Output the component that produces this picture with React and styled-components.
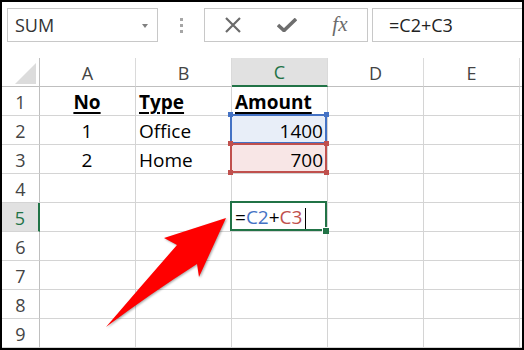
import React from "react";
import styled, { createGlobalStyle } from "styled-components";

const Global = createGlobalStyle`
  html, body { margin: 0; padding: 0; background: #fff; }
  body { font-family: "Open Sans", "Liberation Sans", sans-serif; }
`;

const GREEN = "#217346";
const BLUE = "#4472c4";
const RED = "#c0504d";
const GRID = "#d4d4d4";

const Frame = styled.div`
  position: relative;
  width: 524px;
  height: 350px;
  box-sizing: border-box;
  border: 2px solid #000;
  overflow: hidden;
  background: #fff;
  display: flex;
  flex-direction: column;
`;

const Toolbar = styled.div`
  display: flex;
  align-items: flex-start;
  height: 56px;
  flex: none;
  box-sizing: border-box;
  padding: 6px 0 0 5px;
`;

const Box = styled.div`
  height: 34px;
  box-sizing: border-box;
  border: 1px solid #c8c8c8;
  display: flex;
  align-items: center;
  font-family: "Open Sans", sans-serif;
  font-size: 18px;
  color: #222;
`;

const NameBox = styled(Box)`
  width: 151px;
  justify-content: space-between;
  padding: 0 9px 0 7px;
  color: #333;
`;

const Caret = styled.span`
  width: 0;
  height: 0;
  border-left: 3.5px solid transparent;
  border-right: 3.5px solid transparent;
  border-top: 4px solid #808080;
  margin-top: 1px;
`;

const Dots = styled.div`
  width: 46px;
  height: 34px;
  display: flex;
  flex-direction: column;
  align-items: center;
  justify-content: center;
  gap: 3px;
`;

const Dot = styled.span`
  width: 3px;
  height: 3px;
  background: #a6a6a6;
`;

const Controls = styled(Box)`
  width: 164px;
  justify-content: space-around;
  padding: 0 2px;
  color: #6b6b6b;
`;

const Fx = styled.span`
  font-family: "Liberation Serif", "DejaVu Serif", serif;
  font-style: italic;
  font-size: 21px;
  color: #6b6b6b;
  margin-top: -1px;
`;

const Formula = styled(Box)`
  flex: 1;
  margin-left: 4px;
  margin-right: -2px;
  padding-left: 16px;
`;

const Sheet = styled.div`
  display: grid;
  grid-template-columns: 38px repeat(5, 96px) 1fr;
  grid-auto-rows: 29px;
  flex: none;
`;

const HeadCell = styled.div`
  box-sizing: border-box;
  display: flex;
  align-items: center;
  justify-content: center;
  font-family: "Open Sans", sans-serif;
  font-size: 18px;
  color: ${(p) => (p.$active ? GREEN : "#444")};
  background: ${(p) => (p.$active ? "#e1e1e1" : "#fff")};
  border-right: 1px solid #dadada;
  border-bottom: 1px solid #bfbfbf;
  padding-top: 1px;
`;

const ColHead = styled(HeadCell)`
  ${(p) => p.$active && `border-bottom: 2px solid ${GREEN};`}
`;

const RowHead = styled(HeadCell)`
  border-bottom: 1px solid #d4d4d4;
  border-right: 1px solid #bfbfbf;
  ${(p) => p.$active && `border-right: 2px solid ${GREEN};`}
`;

const Corner = styled(HeadCell)`
  position: relative;
  border-right: 1px solid #bfbfbf;
`;

const CornerTri = styled.svg`
  position: absolute;
  left: 0;
  top: 0;
`;

const fills = { blue: "#e8eef8", red: "#f8e6e6", green: "#fff" };
const rings = { blue: BLUE, red: RED, green: GREEN };

const Cell = styled.div`
  position: relative;
  box-sizing: border-box;
  border-right: 1px solid ${GRID};
  border-bottom: 1px solid ${GRID};
  display: flex;
  align-items: center;
  justify-content: ${(p) =>
    p.$align === "center" ? "center" : p.$align === "right" ? "flex-end" : "flex-start"};
  padding: 3px 4px 0 3px;
  font-family: "Open Sans", sans-serif;
  font-size: 19px;
  line-height: 1;
  color: #000;
  font-weight: ${(p) => (p.$bold ? 700 : 400)};
  background: ${(p) => (p.$sel ? fills[p.$sel] : "#fff")};
  ${(p) =>
    p.$sel &&
    `&::after {
      content: "";
      position: absolute;
      top: -2px; left: -2px; right: 0; bottom: 0;
      border: 2px solid ${rings[p.$sel]};
      pointer-events: none;
      z-index: 1;
    }`}
`;

const Under = styled.span`
  text-decoration: underline;
  text-decoration-thickness: 2px;
  text-underline-offset: 3px;
`;

const Handle = styled.span`
  position: absolute;
  width: 5px;
  height: 5px;
  background: ${(p) => p.$c};
  z-index: 2;
  ${(p) => (p.$top ? "top: -4px;" : "bottom: -2px;")}
  ${(p) => (p.$left ? "left: -4px;" : "right: -2px;")}
`;

const FillHandle = styled.span`
  position: absolute;
  right: -2px;
  bottom: -3px;
  width: 6px;
  height: 6px;
  background: ${GREEN};
  border-left: 1px solid #fff;
  border-top: 1px solid #fff;
  z-index: 2;
`;

const Ref = styled.span`
  color: ${(p) => p.$c};
`;

const Caret2 = styled.span`
  display: inline-block;
  width: 1px;
  height: 22px;
  background: #000;
  margin-left: 3px;
  vertical-align: middle;
`;

const Arrow = styled.svg`
  position: absolute;
  left: -2px;
  top: -2px;
  z-index: 5;
  filter: drop-shadow(1px 1px 1px rgba(0, 0, 0, 0.35));
`;

const cols = ["A", "B", "C", "D", "E"];

const data = {
  1: [
    { t: <Under>No</Under>, a: "center", b: true },
    { t: <Under>Type</Under>, b: true },
    { t: <Under>Amount</Under>, b: true },
  ],
  2: [{ t: "1", a: "center" }, { t: "Office" }, { t: "1400", a: "right", s: "blue" }],
  3: [{ t: "2", a: "center" }, { t: "Home" }, { t: "700", a: "right", s: "red" }],
  5: [
    {},
    {},
    {
      s: "green",
      t: (
        <span>
          =<Ref $c={BLUE}>C2</Ref>+<Ref $c={RED}>C3</Ref>
          <Caret2 />
        </span>
      ),
    },
  ],
};

function renderHandles(s) {
  if (s === "blue")
    return (
      <>
        <Handle $c={BLUE} $top $left />
        <Handle $c={BLUE} $top />
      </>
    );
  if (s === "red")
    return (
      <>
        <Handle $c={RED} $top $left />
        <Handle $c={RED} $top />
        <Handle $c={RED} $left />
        <Handle $c={RED} />
      </>
    );
  if (s === "green") return <FillHandle />;
  return null;
}

export default function App() {
  const rows = [1, 2, 3, 4, 5, 6, 7, 8, 9];
  return (
    <>
      <Global />
      <Frame>
        <Toolbar>
          <NameBox>
            <span>SUM</span>
            <Caret />
          </NameBox>
          <Dots>
            <Dot />
            <Dot />
            <Dot />
          </Dots>
          <Controls>
            <svg width="18" height="18" viewBox="0 0 18 18">
              <path d="M2 2 L16 16 M16 2 L2 16" stroke="#6b6b6b" strokeWidth="2.2" fill="none" />
            </svg>
            <svg width="20" height="14" viewBox="0 0 20 14">
              <path d="M1 7 L7 12.5 L19 1" stroke="#6e6e6e" strokeWidth="3.6" fill="none" />
            </svg>
            <Fx>fx</Fx>
          </Controls>
          <Formula>=C2+C3</Formula>
        </Toolbar>
        <Sheet>
          <Corner>
            <CornerTri width="38" height="29">
              <polygon points="13,26 34,26 34,5" fill="#dcdcdc" />
            </CornerTri>
          </Corner>
          {cols.map((c) => (
            <ColHead key={c} $active={c === "C"}>
              {c}
            </ColHead>
          ))}
          <ColHead />
          {rows.map((r) => (
            <React.Fragment key={r}>
              <RowHead $active={r === 5}>{r}</RowHead>
              {cols.map((c, i) => {
                const d = (data[r] && data[r][i]) || {};
                return (
                  <Cell key={c} $align={d.a} $bold={d.b} $sel={d.s}>
                    {d.t}
                    {renderHandles(d.s)}
                  </Cell>
                );
              })}
              <Cell />
            </React.Fragment>
          ))}
        </Sheet>
        <Arrow width="524" height="350" viewBox="0 0 524 350">
          <path
            d="M106 327 Q142 285 177 245 L164 238 L226 218 L199 277 L197 264 Q150 294 106 327 Z"
            fill="#ff0000"
          />
        </Arrow>
      </Frame>
    </>
  );
}
